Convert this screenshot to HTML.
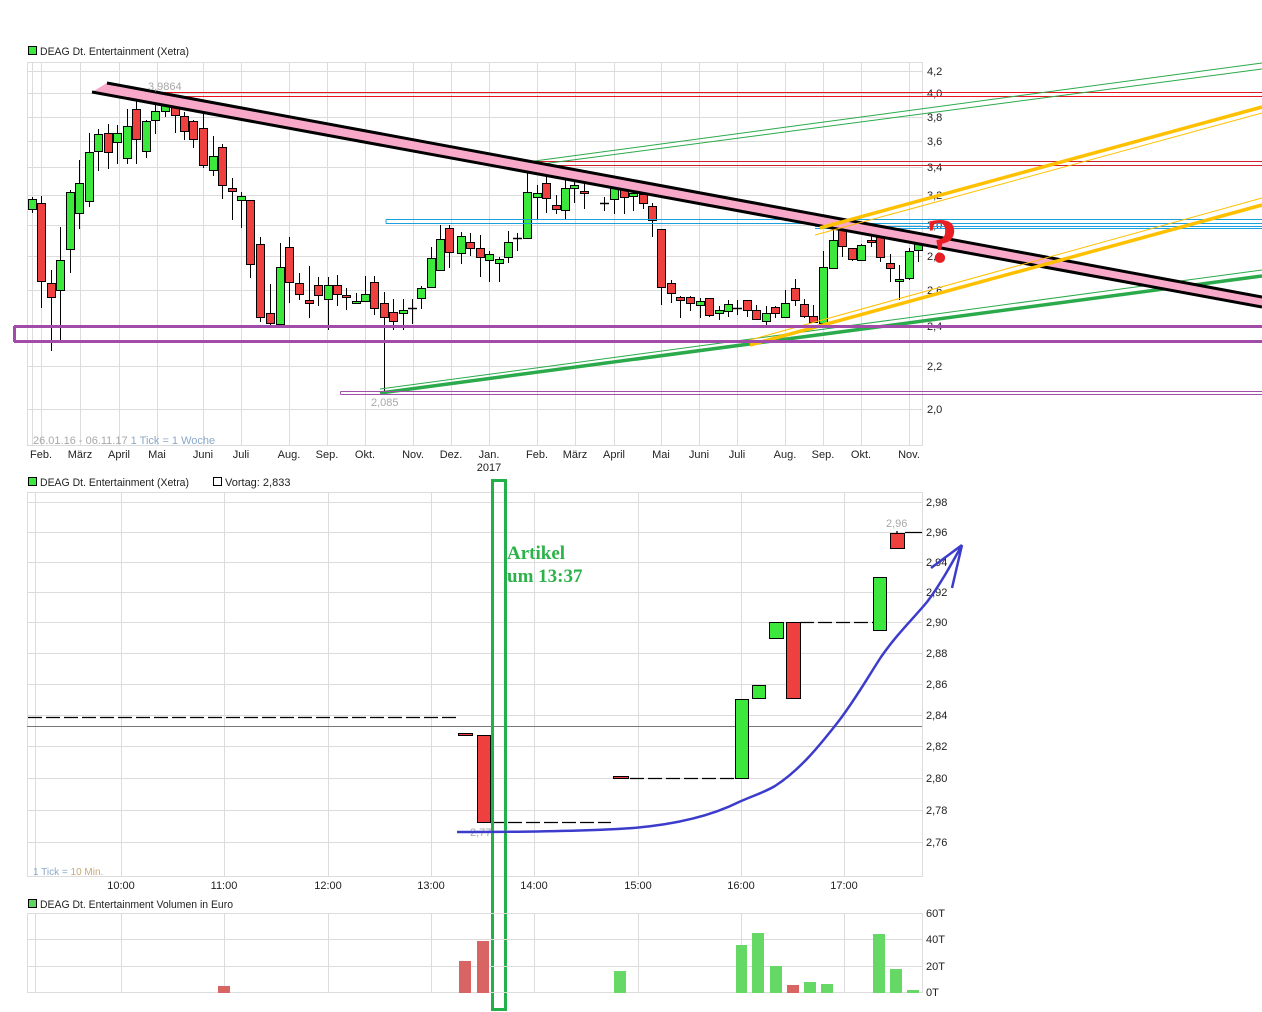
<!DOCTYPE html>
<html><head><meta charset="utf-8"><style>
html,body{margin:0;padding:0;background:#fff;width:1262px;height:1012px;overflow:hidden}
svg{display:block;font-family:"Liberation Sans",sans-serif}
</style></head><body>
<svg id="s" width="1262" height="1012" viewBox="0 0 1262 1012" xmlns="http://www.w3.org/2000/svg">
<rect width="1262" height="1012" fill="#fff"/>
<!-- legends -->
<rect x="28.5" y="46.5" width="8" height="8" fill="#3de83d" stroke="#000"/>
<text x="40" y="55" font-size="11" fill="#222" textLength="149" lengthAdjust="spacingAndGlyphs">DEAG Dt. Entertainment (Xetra)</text>
<rect x="28.5" y="477.5" width="8" height="8" fill="#3de83d" stroke="#000"/>
<text x="40" y="486" font-size="11" fill="#222" textLength="149" lengthAdjust="spacingAndGlyphs">DEAG Dt. Entertainment (Xetra)</text>
<rect x="213.5" y="477.5" width="8" height="8" fill="#fff" stroke="#000"/>
<text x="225" y="486" font-size="11" fill="#222">Vortag: 2,833</text>
<rect x="28.5" y="899.5" width="8" height="8" fill="#5fd35f" stroke="#000"/>
<text x="40" y="908" font-size="11" fill="#222" textLength="193" lengthAdjust="spacingAndGlyphs">DEAG Dt. Entertainment Volumen in Euro</text>

<!-- TOP CHART grid -->
<g stroke="#dcdcdc" stroke-width="1" fill="none">
<rect x="27.5" y="62.5" width="895" height="383"/>
<path d="M27 71.5H922M27 93.5H922M27 117.5H922M27 141.5H922M27 167.5H922M27 195.5H922M27 225.5H922M27 256.5H922M27 290.5H922M27 326.5H922M27 366.5H922M27 409.5H922"/>
<path d="M32.5 62V445M41.5 62V445M80.5 62V445M119.5 62V445M157.5 62V445M203.5 62V445M241.5 62V445M289.5 62V445M327.5 62V445M365.5 62V445M413.5 62V445M451.5 62V445M489.5 62V445M537.5 62V445M575.5 62V445M614.5 62V445M661.5 62V445M699.5 62V445M737.5 62V445M785.5 62V445M823.5 62V445M861.5 62V445M909.5 62V445"/>
</g>
<g font-size="11" fill="#222">
<text x="927" y="75">4,2</text><text x="927" y="97">4,0</text><text x="927" y="121">3,8</text><text x="927" y="145">3,6</text><text x="927" y="171">3,4</text><text x="927" y="199">3,2</text><text x="927" y="229">3,0</text><text x="927" y="260">2,8</text><text x="927" y="294">2,6</text><text x="927" y="330">2,4</text><text x="927" y="370">2,2</text><text x="927" y="413">2,0</text>
</g>
<g font-size="11" fill="#222" text-anchor="middle">
<text x="41" y="458">Feb.</text><text x="80" y="458">März</text><text x="119" y="458">April</text><text x="157" y="458">Mai</text><text x="203" y="458">Juni</text><text x="241" y="458">Juli</text><text x="289" y="458">Aug.</text><text x="327" y="458">Sep.</text><text x="365" y="458">Okt.</text><text x="413" y="458">Nov.</text><text x="451" y="458">Dez.</text><text x="489" y="458">Jan.</text><text x="489" y="471">2017</text><text x="537" y="458">Feb.</text><text x="575" y="458">März</text><text x="614" y="458">April</text><text x="661" y="458">Mai</text><text x="699" y="458">Juni</text><text x="737" y="458">Juli</text><text x="785" y="458">Aug.</text><text x="823" y="458">Sep.</text><text x="861" y="458">Okt.</text><text x="909" y="458">Nov.</text>
</g>
<text x="33" y="444" font-size="11" fill="#a8a8a8">26.01.16 - 06.11.17 <tspan fill="#8aa8c8">1 Tick = 1 Woche</tspan></text>

<g id="candles"></g>

<!-- overlay lines -->
<g fill="none">
<path d="M160 92.5H1262M160 96.5H1262" stroke="#e8141e" stroke-width="1"/>
<path d="M527 161.5H1262M527 165.5H1262" stroke="#d0202a" stroke-width="1"/>
<path d="M527 162L1262 63M527 166L1262 69" stroke="#2aaa4a" stroke-width="1"/>
<path d="M386 219.5H1262M386 223.5H1262M386 219.5V223.5" stroke="#1aa0dc" stroke-width="1"/>
<path d="M815 226.5H1262M815 228.5H1262" stroke="#1aa0dc" stroke-width="1"/>
<path d="M380 389L1262 270" stroke="#2aaa4a" stroke-width="1"/>
<path d="M380 393L1262 276" stroke="#2aaa4a" stroke-width="3.5"/>
<path d="M340.5 391.5H1262M340.5 394.5H1262M340.5 391.5V394.5" stroke="#a050a8" stroke-width="1"/>
<polygon points="107,83 1262,297 1262,307 92,92" fill="#f8a8c8" stroke="none"/>
<path d="M107 83L1262 297M92 92L1262 307" stroke="#000" stroke-width="3"/>
<path d="M750 340L1262 198M815 235L1262 113" stroke="#ffc000" stroke-width="1"/>
<path d="M750 345L1262 205M820 228L1262 107" stroke="#ffc000" stroke-width="3.5"/>
<path d="M14 326.5H1262M14 341.5H1262M14.5 326V342" stroke="#a04ca8" stroke-width="3"/>
</g>
<text x="148" y="90" font-size="11" fill="#a8a8a8">3,9864</text>
<text x="371" y="406" font-size="11" fill="#a8a8a8">2,085</text>
<text x="926" y="262" font-size="64" font-weight="bold" fill="#e81e24" font-family="Liberation Serif,serif">?</text>

<!-- BOTTOM CHART -->
<g stroke="#dcdcdc" stroke-width="1" fill="none">
<rect x="27.5" y="492.5" width="895" height="384"/>
<path d="M27 502.5H922M27 532.5H922M27 562.5H922M27 592.5H922M27 622.5H922M27 653.5H922M27 684.5H922M27 715.5H922M27 746.5H922M27 778.5H922M27 810.5H922M27 842.5H922"/>
<path d="M35.5 492V876M121.5 492V876M224.5 492V876M328.5 492V876M431.5 492V876M534.5 492V876M638.5 492V876M741.5 492V876M844.5 492V876"/>
</g>
<path d="M27 726.5H922" stroke="#777" stroke-width="1"/>
<g font-size="11" fill="#222">
<text x="926" y="506">2,98</text><text x="926" y="536">2,96</text><text x="926" y="566">2,94</text><text x="926" y="596">2,92</text><text x="926" y="626">2,90</text><text x="926" y="657">2,88</text><text x="926" y="688">2,86</text><text x="926" y="719">2,84</text><text x="926" y="750">2,82</text><text x="926" y="782">2,80</text><text x="926" y="814">2,78</text><text x="926" y="846">2,76</text>
</g>
<g font-size="11" fill="#222" text-anchor="middle">
<text x="121" y="889">10:00</text><text x="224" y="889">11:00</text><text x="328" y="889">12:00</text><text x="431" y="889">13:00</text><text x="534" y="889">14:00</text><text x="638" y="889">15:00</text><text x="741" y="889">16:00</text><text x="844" y="889">17:00</text>
</g>
<text x="33" y="875" font-size="10" fill="#8aa8c8">1 Tick = <tspan fill="#c8a878">10 Min.</tspan></text>
<g stroke="#000" stroke-width="1.3" fill="none">
<path d="M28 717.5H456" stroke-dasharray="14 4"/>
<path d="M490 822.5H611" stroke-dasharray="14 4"/>
<path d="M630 778.5H735" stroke-dasharray="14 4"/>
<path d="M800 622.5H875" stroke-dasharray="14 4"/>
<path d="M905 532.5H922"/>
<path d="M897 531V533"/>
</g>
<g stroke="#000" stroke-width="1">
<rect x="458.5" y="733.5" width="14" height="2" fill="#ef4040"/>
<rect x="477.5" y="735.5" width="13" height="87" fill="#ef4040"/>
<rect x="613.5" y="776.5" width="15" height="2" fill="#ef4040"/>
<rect x="735.5" y="699.5" width="13" height="79" fill="#3de83d"/>
<rect x="752.5" y="685.5" width="13" height="13" fill="#3de83d"/>
<rect x="769.5" y="622.5" width="14" height="16" fill="#3de83d"/>
<rect x="786.5" y="622.5" width="14" height="76" fill="#ef4040"/>
<rect x="873.5" y="577.5" width="13" height="53" fill="#3de83d"/>
<rect x="890.5" y="533.5" width="14" height="15" fill="#ef4040"/>
</g>
<text x="886" y="527" font-size="11" fill="#a8a8a8">2,96</text>
<text x="470" y="836" font-size="11" fill="#a8a8a8">2,77</text>
<rect x="492.5" y="480.5" width="13" height="529" fill="none" stroke="#22b04a" stroke-width="3"/>
<text x="507" y="559" font-size="19" font-weight="bold" fill="#2db24a" font-family="Liberation Serif,serif">Artikel</text>
<text x="507" y="582" font-size="19" font-weight="bold" fill="#2db24a" font-family="Liberation Serif,serif">um 13:37</text>
<path d="M457 832C520 832 590 831 633 828C680 824 715 814 739 802C755 795 765 792 775 786C800 770 820 745 838 722C855 700 868 677 881 657C897 634 912 620 927 602C940 585 952 563 962 545M962 545L931 568M962 545L952 588" fill="none" stroke="#3c3ccc" stroke-width="2.5" stroke-linejoin="round"/>

<!-- VOLUME -->
<g stroke="#dcdcdc" stroke-width="1" fill="none">
<rect x="27.5" y="913.5" width="895" height="79"/>
<path d="M27 939.5H922M27 966.5H922"/>
<path d="M35.5 913V993M121.5 913V993M224.5 913V993M328.5 913V993M431.5 913V993M534.5 913V993M638.5 913V993M741.5 913V993M844.5 913V993"/>
</g>
<g font-size="11" fill="#222">
<text x="926" y="917">60T</text><text x="926" y="943">40T</text><text x="926" y="970">20T</text><text x="926" y="996">0T</text>
</g>
<g fill="#d86464">
<rect x="218" y="986" width="12" height="7"/><rect x="459" y="961" width="12" height="32"/><rect x="477" y="941" width="12" height="52"/><rect x="787" y="985" width="12" height="8"/>
</g>
<g fill="#66d866">
<rect x="614" y="971" width="12" height="22"/><rect x="736" y="945" width="11" height="48"/><rect x="752" y="933" width="12" height="60"/><rect x="770" y="966" width="12" height="27"/><rect x="804" y="982" width="12" height="11"/><rect x="821" y="984" width="12" height="9"/><rect x="873" y="934" width="12" height="59"/><rect x="890" y="969" width="12" height="24"/><rect x="907" y="990" width="12" height="3"/>
</g>
</svg>
<script>
var d=[[32,'g',199,209,197,213],[41,'r',203,281,196,308],[51,'r',283,297,270,351],[60,'g',260,290,227,341],[70,'g',192,249,190,273],[79,'g',183,213,160,229],[89,'g',152,201,133,207],[98,'g',134,151,129,171],[108,'r',133,152,124,169],[117,'g',133,142,125,164],[127,'g',126,158,109,164],[136,'r',109,139,101,164],[146,'g',121,151,120,158],[155,'g',111,120,104,134],[165,'g',104,111,98,117],[175,'r',99,115,96,133],[184,'r',116,131,112,140],[193,'r',121,139,120,148],[203,'r',128,165,112,168],[213,'g',156,170,136,176],[222,'r',147,185,144,199],[232,'r',188,191,178,220],[241,'g',196,200,192,228],[250,'r',200,264,200,278],[260,'r',244,317,237,322],[270,'r',313,323,284,325],[280,'g',267,324,243,325],[289,'r',247,282,237,303],[299,'r',283,294,273,300],[309,'r',300,303,266,318],[318,'r',285,295,277,306],[328,'g',285,299,277,330],[337,'r',285,294,275,306],[346,'r',295,297,288,310],[356,'g',301,303,293,304],[365,'g',294,301,276,302],[374,'r',282,308,276,315],[384,'r',303,317,292,392],[393,'r',312,321,299,330],[403,'g',310,313,299,330],[412,'k',308,308,299,324],[421,'g',288,298,286,309],[431,'g',258,287,247,287],[440,'g',239,270,225,271],[449,'r',228,252,225,268],[461,'g',236,253,232,264],[470,'r',242,248,233,256],[480,'r',248,257,235,277],[489,'g',254,260,251,282],[499,'g',259,263,257,282],[508,'g',242,257,231,263],[517,'k',238,238,233,251],[527,'g',192,238,161,239],[537,'g',193,197,185,219],[546,'r',183,198,169,213],[556,'r',205,209,195,214],[565,'g',188,210,178,220],[574,'g',185,188,178,203],[584,'r',191,193,180,209],[604,'k',203,203,197,211],[614,'g',188,199,183,214],[624,'r',186,197,185,214],[633,'g',193,196,186,211],[643,'r',194,203,190,209],[652,'r',206,220,203,237],[661,'r',229,287,229,305],[671,'r',283,293,280,303],[680,'r',297,300,296,318],[690,'r',297,303,296,311],[700,'g',301,305,298,318],[709,'r',298,315,298,317],[719,'g',310,313,306,320],[728,'g',304,311,300,317],[737,'k',308,308,300,315],[747,'r',300,310,300,317],[756,'r',310,319,305,320],[766,'g',313,321,306,326],[775,'r',307,313,306,318],[785,'g',303,317,290,318],[795,'r',288,300,279,306],[804,'r',304,316,299,318],[813,'r',316,322,305,322],[823,'g',267,323,251,323],[833,'g',240,268,225,269],[842,'r',225,246,222,257],[852,'r',248,259,249,261],[861,'g',245,260,244,261],[871,'r',240,242,228,247],[880,'r',237,257,233,262],[890,'r',263,268,254,282],[899,'g',279,281,265,300],[909,'g',251,278,248,280],[918,'g',235,250,232,262]];
var g=document.getElementById('candles'),h='';
d.forEach(function(c){var x=c[0];h+='<line x1="'+(x+.5)+'" y1="'+c[4]+'" x2="'+(x+.5)+'" y2="'+c[5]+'" stroke="#000"/>';
if(c[1]=='k'){h+='<line x1="'+(x-4)+'" y1="'+(c[2]+.5)+'" x2="'+(x+5)+'" y2="'+(c[2]+.5)+'" stroke="#000" stroke-width="1.5"/>';}
else{var hh=Math.max(c[3]-c[2],2);h+='<rect x="'+(x-3.5)+'" y="'+(c[2]+.5)+'" width="8" height="'+hh+'" fill="'+(c[1]=='g'?'#3de83d':'#ef4040')+'" stroke="#000"/>';}});
g.innerHTML=h;
</script>
</body></html>
